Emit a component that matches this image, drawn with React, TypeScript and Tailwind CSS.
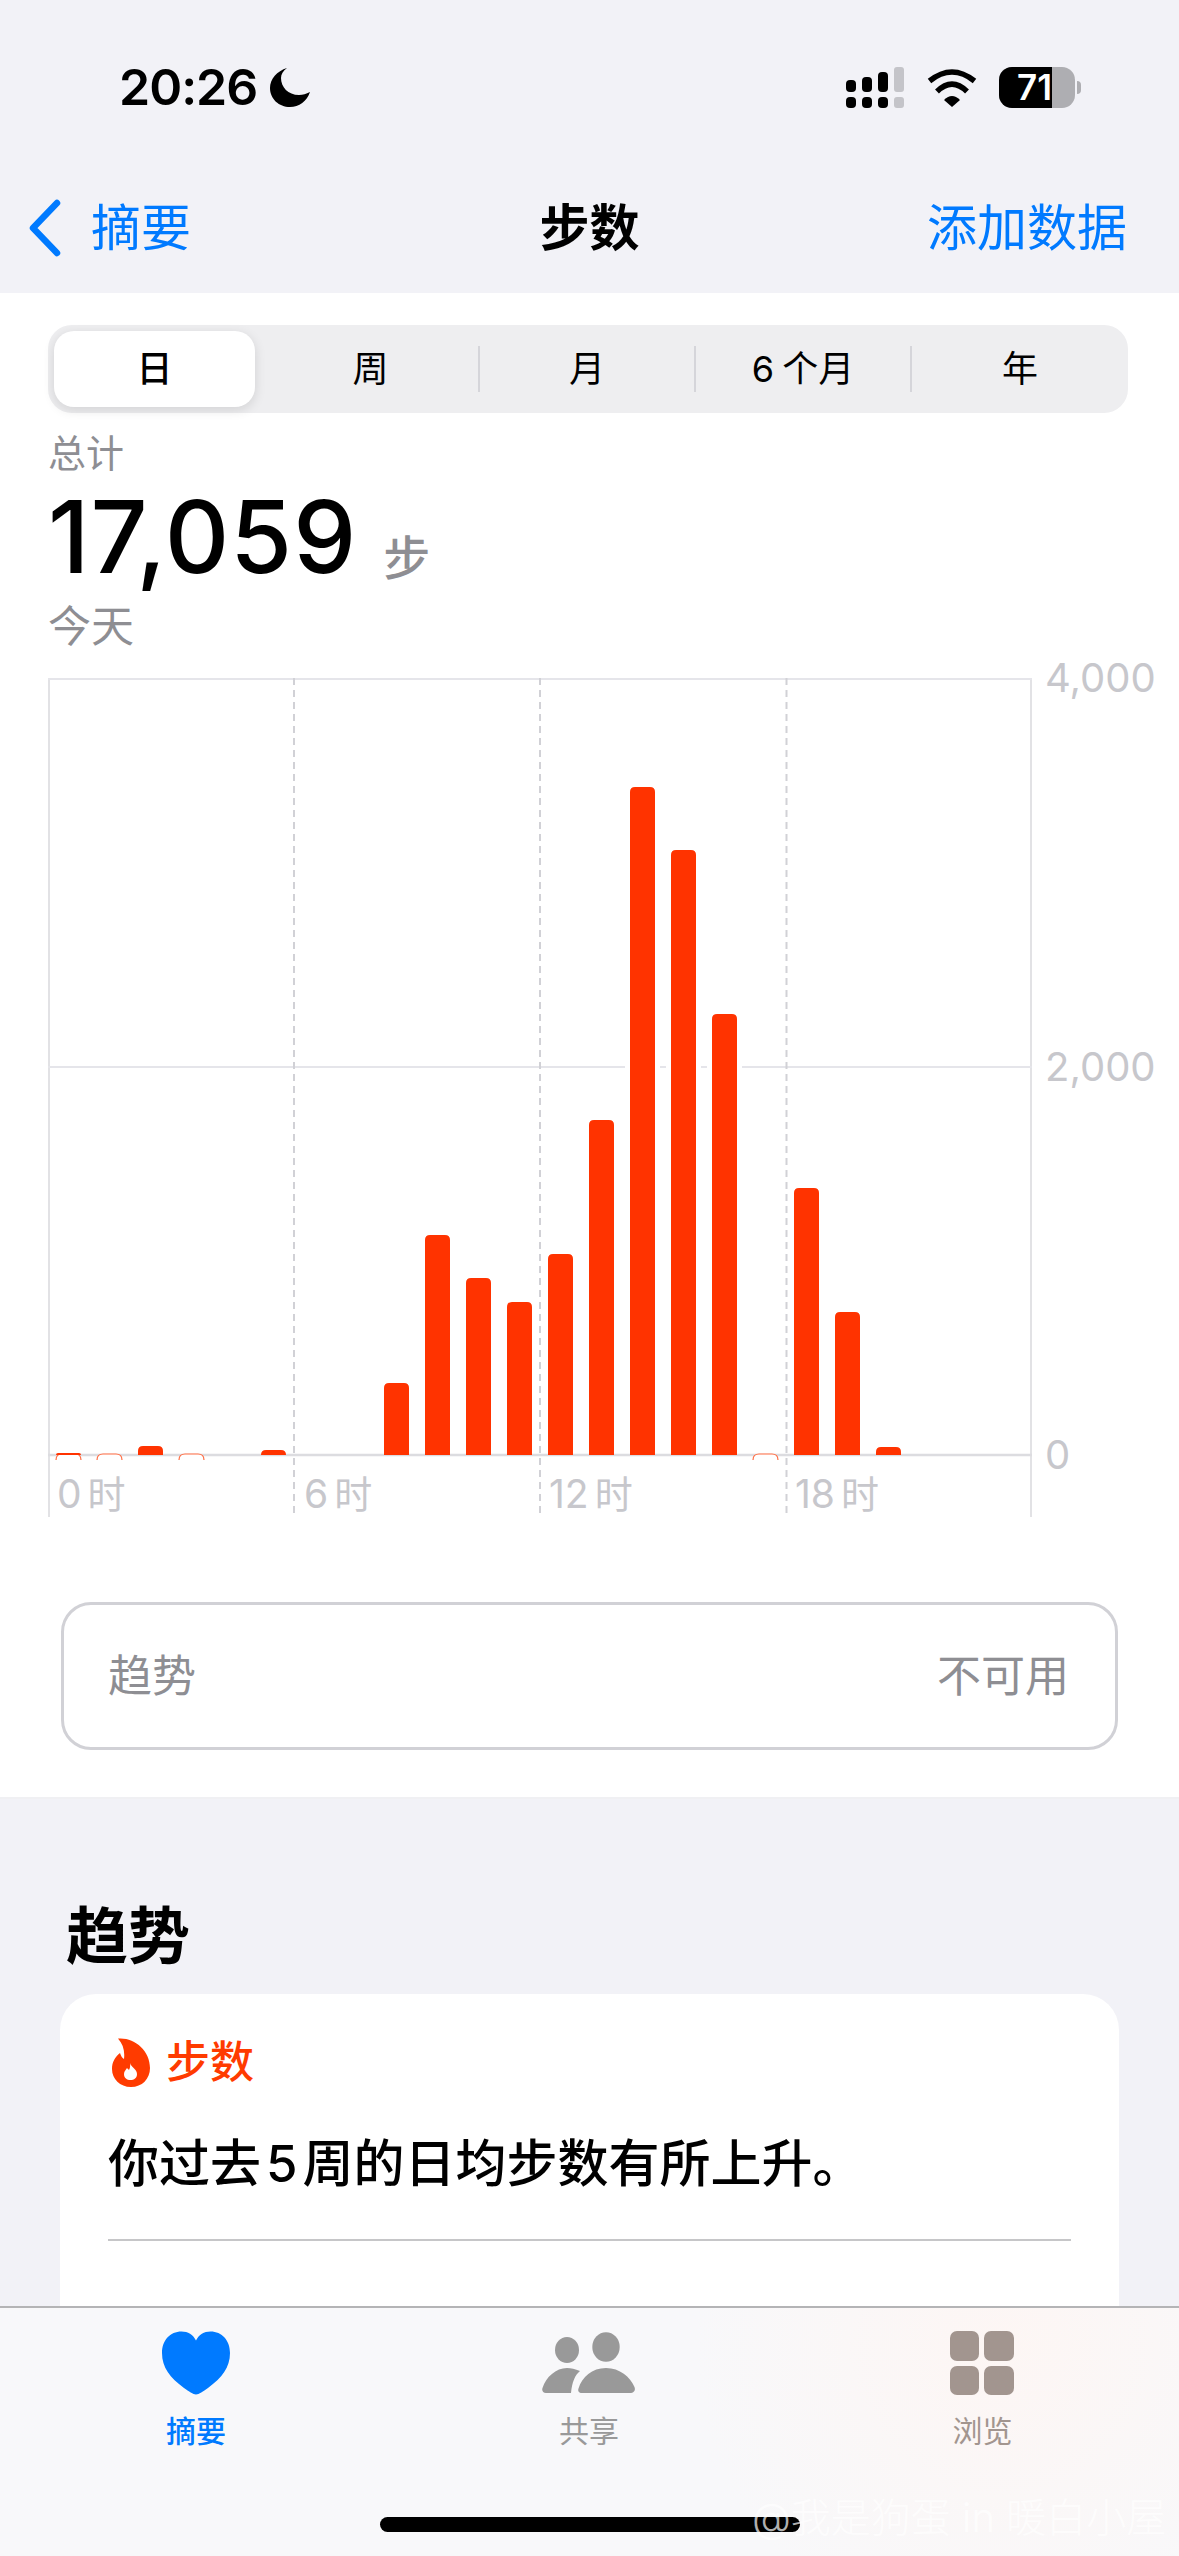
import React from "react";

const BASE = 777;
const heights: [number, number][] = [
  [0, 2], [2, 9], [5, 5], [8, 72], [9, 220], [10, 177], [11, 153], [12, 201], [13, 335],
  [14, 668], [15, 605], [16, 441], [18, 267], [19, 143], [20, 8],
];
const outlined = [0, 1, 3, 17];
const barX = (h: number) => 8 + 41 * h;
const barPath = (x: number, h: number) => {
  const r = Math.min(5, h);
  return `M${x} ${BASE}V${BASE - h + r}Q${x} ${BASE - h} ${x + r} ${BASE - h}H${x + 25 - r}Q${x + 25} ${BASE - h} ${x + 25} ${BASE - h + r}V${BASE}Z`;
};

function Chart() {
  return (
    <div className="relative mt-[24px] h-[839px] w-full">
      <svg className="absolute left-[48px] top-0" width="986" height="839" viewBox="0 0 986 839">
        <line x1="1" y1="0" x2="1" y2="839" stroke="#d8d8dc" strokeWidth="1.5" />
        <line x1="983" y1="0" x2="983" y2="839" stroke="#d8d8dc" strokeWidth="1.5" />
        <line x1="0" y1="1" x2="984" y2="1" stroke="#e5e5ea" strokeWidth="2" />
        <line x1="0" y1="389" x2="984" y2="389" stroke="#e5e5ea" strokeWidth="2" />
        {[246, 492, 738.5].map((x) => (
          <line key={x} x1={x} y1="0" x2={x} y2="839" stroke="#d1d1d6" strokeWidth="2" strokeDasharray="7 5" />
        ))}
        {heights.map(([h, v]) => (
          <path key={h} d={barPath(barX(h), v)} fill="#fff" stroke="#fff" strokeWidth="10" />
        ))}
        <line x1="0" y1={BASE} x2="984" y2={BASE} stroke="#dcdce0" strokeWidth="2.5" />
        {outlined.map((h) => (
          <path
            key={h}
            d={`M${barX(h)} ${BASE + 5}Q${barX(h)} ${BASE - 1} ${barX(h) + 6} ${BASE - 1}H${barX(h) + 19}Q${barX(h) + 25} ${BASE - 1} ${barX(h) + 25} ${BASE + 5}`}
            fill="#fff"
            stroke="#ff6a40"
            strokeWidth="1.2"
          />
        ))}
        {heights.map(([h, v]) => (
          <path key={h} d={barPath(barX(h), v)} fill="#ff3300" />
        ))}
      </svg>
      {[
        ["4,000", 0],
        ["2,000", 389],
        ["0", 777],
      ].map(([t, y]) => (
        <span
          key={t}
          className="absolute left-[1045px] -translate-y-1/2 text-[40px] leading-none text-[#c7c7cc]"
          style={{ top: y as number }}
        >
          {t}
        </span>
      ))}
      {[
        ["0", 57],
        ["6", 304],
        ["12", 549],
        ["18", 795],
      ].map(([t, x]) => (
        <span
          key={t}
          className="absolute top-[796px] flex items-center gap-[6px] text-[39px] leading-[40px] text-[#c7c7cc]"
          style={{ left: x as number }}
        >
          <span>{t}</span>
          <span className="text-[38px]">时</span>
        </span>
      ))}
    </div>
  );
}

function Segments() {
  const Sep = () => <div className="h-[46px] w-[2px] shrink-0 bg-[#d5d5da]" />;
  return (
    <div className="mx-[48px] mt-[32px] flex h-[88px] w-[1080px] items-center rounded-[24px] bg-[#eeeef0] pl-[6px] text-[36px] leading-none text-black">
      <div className="flex h-[76px] w-[201px] shrink-0 items-center justify-center rounded-[20px] bg-white font-medium shadow-[0_3px_12px_rgba(0,0,0,0.12)]">
        日
      </div>
      <div className="flex h-full w-[223px] shrink-0 items-center justify-center pl-[8px]">周</div>
      <Sep />
      <div className="flex w-[214px] shrink-0 items-center justify-center">月</div>
      <Sep />
      <div className="flex w-[214px] shrink-0 items-center justify-center gap-[8px]">
        <span>6</span>
        <span>个月</span>
      </div>
      <Sep />
      <div className="flex flex-1 items-center justify-center">年</div>
    </div>
  );
}

export default function App() {
  return (
    <div className="relative h-[2556px] w-[1179px] overflow-hidden bg-[#f2f2f7] font-['Inter','Noto_Sans_CJK_SC',sans-serif]">
      {/* Status + nav */}
      <header className="h-[293px]">
        <div className="flex h-[176px] items-start justify-between pl-[119px] pr-[98px] pt-[67px]">
          <div className="flex items-center gap-[13px]">
            <span className="text-[50px] font-semibold leading-[41px] tracking-[-1px] text-black">20:26</span>
            <svg width="40" height="39" viewBox="0 0 40 39">
              <path d="M17 0C7 3 0 11 0 20C0 31 9 39 20 39C29 39 37 33 40 24C36 26 33 27 29 27C18 27 11 19 11 10C11 6 13 3 17 0Z" fill="#000" />
            </svg>
          </div>
          <div className="flex items-center">
            <svg width="58" height="41" viewBox="0 0 58 41" className="mr-[23px]">
              <rect x="0" y="13" width="10" height="12" rx="4" fill="#000" />
              <rect x="16" y="10" width="10" height="15" rx="4" fill="#000" />
              <rect x="32" y="5" width="10" height="20" rx="4" fill="#000" />
              <rect x="48" y="0" width="10" height="25" rx="3" fill="#c4c4c9" />
              <rect x="0" y="30" width="10" height="11" rx="4" fill="#000" />
              <rect x="16" y="30" width="10" height="11" rx="4" fill="#000" />
              <rect x="32" y="30" width="10" height="11" rx="4" fill="#000" />
              <rect x="48" y="30" width="10" height="11" rx="3" fill="#c4c4c9" />
            </svg>
            <svg width="50" height="38" viewBox="0 0 50 38" className="mr-[22px]">
              <path d="M2.5 12Q25 -6 47.5 12" fill="none" stroke="#000" strokeWidth="5.5" strokeLinecap="butt" />
              <path d="M10 22.5Q25 7.5 40 22.5" fill="none" stroke="#000" strokeWidth="5.5" />
              <path d="M17 31Q25 23 33 31L25 38Z" fill="#000" />
            </svg>
            <div className="flex h-[41px] w-[76px] overflow-hidden rounded-[13px] bg-[#aeaeb2]">
              <div className="flex h-full w-[53px] items-center justify-end overflow-hidden bg-black text-[35px] font-semibold leading-none text-white">
                71
              </div>
            </div>
            <div className="ml-[2px] h-[13px] w-[4px] rounded-r-full bg-[#aeaeb2]" />
          </div>
        </div>
        <div className="flex h-[104px] items-start justify-between pl-[28px] pr-[52px] pt-[23px] text-[50px] leading-[58px]">
          <div className="flex w-[322px] items-center text-[#007aff]">
            <svg width="34" height="58" viewBox="0 0 34 58">
              <path d="M29 4L5 29L29 54" fill="none" stroke="#007aff" strokeWidth="6.5" strokeLinecap="round" strokeLinejoin="round" />
            </svg>
            <span className="ml-[29px]">摘要</span>
          </div>
          <span className="font-semibold text-black">步数</span>
          <span className="flex w-[298px] justify-end text-[#007aff]">添加数据</span>
        </div>
      </header>

      {/* Main white section */}
      <section className="flex h-[1506px] flex-col border-b-[2px] border-[#f0f0f3] bg-white">
        <Segments />
        <div className="ml-[48px] mt-[15px] text-[38px] leading-[50px] text-[#8e8e93]">总计</div>
        <div className="ml-[48px] mt-[5px] flex h-[108px] items-end">
          <span className="text-[100px] font-medium leading-[108px] tracking-[1px] text-black">17,059</span>
          <span className="mb-[3px] ml-[26px] text-[47px] font-medium leading-[60px] text-[#8e8e93]">步</span>
        </div>
        <div className="ml-[48px] mt-[7px] text-[43px] leading-[56px] text-[#8e8e93]">今天</div>
        <Chart />
        <div className="mx-[61px] mt-[85px] flex h-[148px] items-center justify-between rounded-[30px] border-[3px] border-[#d1d1d6] pl-[44px] pr-[46px] text-[44px] text-[#8e8e93]">
          <span>趋势</span>
          <span>不可用</span>
        </div>
      </section>

      {/* Trends */}
      <h2 className="ml-[66px] mt-[98px] text-[62px] font-bold leading-[80px] text-black">趋势</h2>
      <div className="ml-[60px] mt-[17px] h-[400px] w-[1059px] rounded-t-[36px] bg-white pl-[48px] pr-[48px] pt-[43px]">
        <div className="flex items-center gap-[16px] pl-[4px]">
          <svg width="38" height="49" viewBox="0 0 38 49">
            <path d="M6 .5C22 -1 38 12 38 30C38 41 30 49 19 49C8 49 0 41 0 31C0 24 3 19 8 15C9 18 10 20 12 21C13 13 11 6 6 .5Z" fill="#ff3b00" />
            <path d="M18 25C19 29 25 31 25 36C25 40 22 42 18.5 42C15 42 12 40 12 36C12 33 14 32 15 30C16 31 16.5 31.5 17 32C18 30 18.5 28 18 25Z" fill="#fff" />
          </svg>
          <span className="text-[44px] font-medium leading-[50px] text-[#ff3b00]">步数</span>
        </div>
        <p className="mt-[41px] flex text-[51px] font-medium leading-[72px] text-black">
          <span>你过去</span>
          <span className="mx-[5px]">5</span>
          <span>周的日均步数有所上升。</span>
        </p>
        <div className="mt-[39px] h-[2px] w-full bg-[#c6c6c8]" />
      </div>

      {/* Tab bar, floating over the scrolled content */}
      <nav className="absolute bottom-0 left-0 h-[250px] w-full border-t-[2px] border-[#b4b4b6] bg-[radial-gradient(circle_at_85%_15%,#fdf6f4_0%,#f8f8fa_30%)]">
        <div className="grid grid-cols-3 pt-[23px]">
          <div className="flex flex-col items-center">
            <svg width="68" height="64" viewBox="0 0 68 63" className="mr-[1px]">
              <path d="M34 63C31 63 27 60 22 56.5C8 46 0 36 0 21.5C0 9 8 0 19.5 0C26 0 31 3 34 9C37 3 42 0 48.5 0C60 0 68 9 68 21.5C68 36 60 46 46 56.5C41 60 37 63 34 63Z" fill="#007aff" />
            </svg>
            <span className="mr-[1px] mt-[17px] text-[30px] font-medium leading-[38px] text-[#007aff]">摘要</span>
          </div>
          <div className="flex flex-col items-center">
            <svg width="94" height="64" viewBox="0 0 94 62" className="mr-[1px]">
              <ellipse cx="64" cy="15" rx="13.7" ry="14.7" fill="#999" />
              <ellipse cx="25" cy="18" rx="12" ry="13" fill="#999" />
              <path d="M40 61C37 61 35.5 59 36.5 56.5C40 45 50 36 64 36C78 36 88 45 92.5 55C94 59 91 61 88 61Z" fill="#999" />
              <path d="M4 61C1 61 -.5 58.5 .5 56C4 45 14 36 25 36C29 36 33 37 38 39C33 43 30 50 29 61Z" fill="#999" />
            </svg>
            <span className="mr-[1px] mt-[17px] text-[30px] leading-[38px] text-[#999]">共享</span>
          </div>
          <div className="flex flex-col items-center">
            <div className="mr-[2px] grid h-[64px] w-[64px] grid-cols-2 gap-[5px]">
              <div className="rounded-[7px] bg-[#a2958f]" />
              <div className="rounded-[7px] bg-[#a2958f]" />
              <div className="rounded-[7px] bg-[#a2958f]" />
              <div className="rounded-[7px] bg-[#a2958f]" />
            </div>
            <span className="mt-[17px] text-[30px] leading-[38px] text-[#a2958f]">浏览</span>
          </div>
        </div>
        <div className="absolute left-[380px] top-[209px] h-[15px] w-[420px] rounded-full bg-black" />
        <span className="absolute left-[752px] top-[186px] whitespace-nowrap text-[40px] font-light leading-[48px] text-white/70">
          @我是狗蛋 in 暖白小屋
        </span>
      </nav>
    </div>
  );
}
